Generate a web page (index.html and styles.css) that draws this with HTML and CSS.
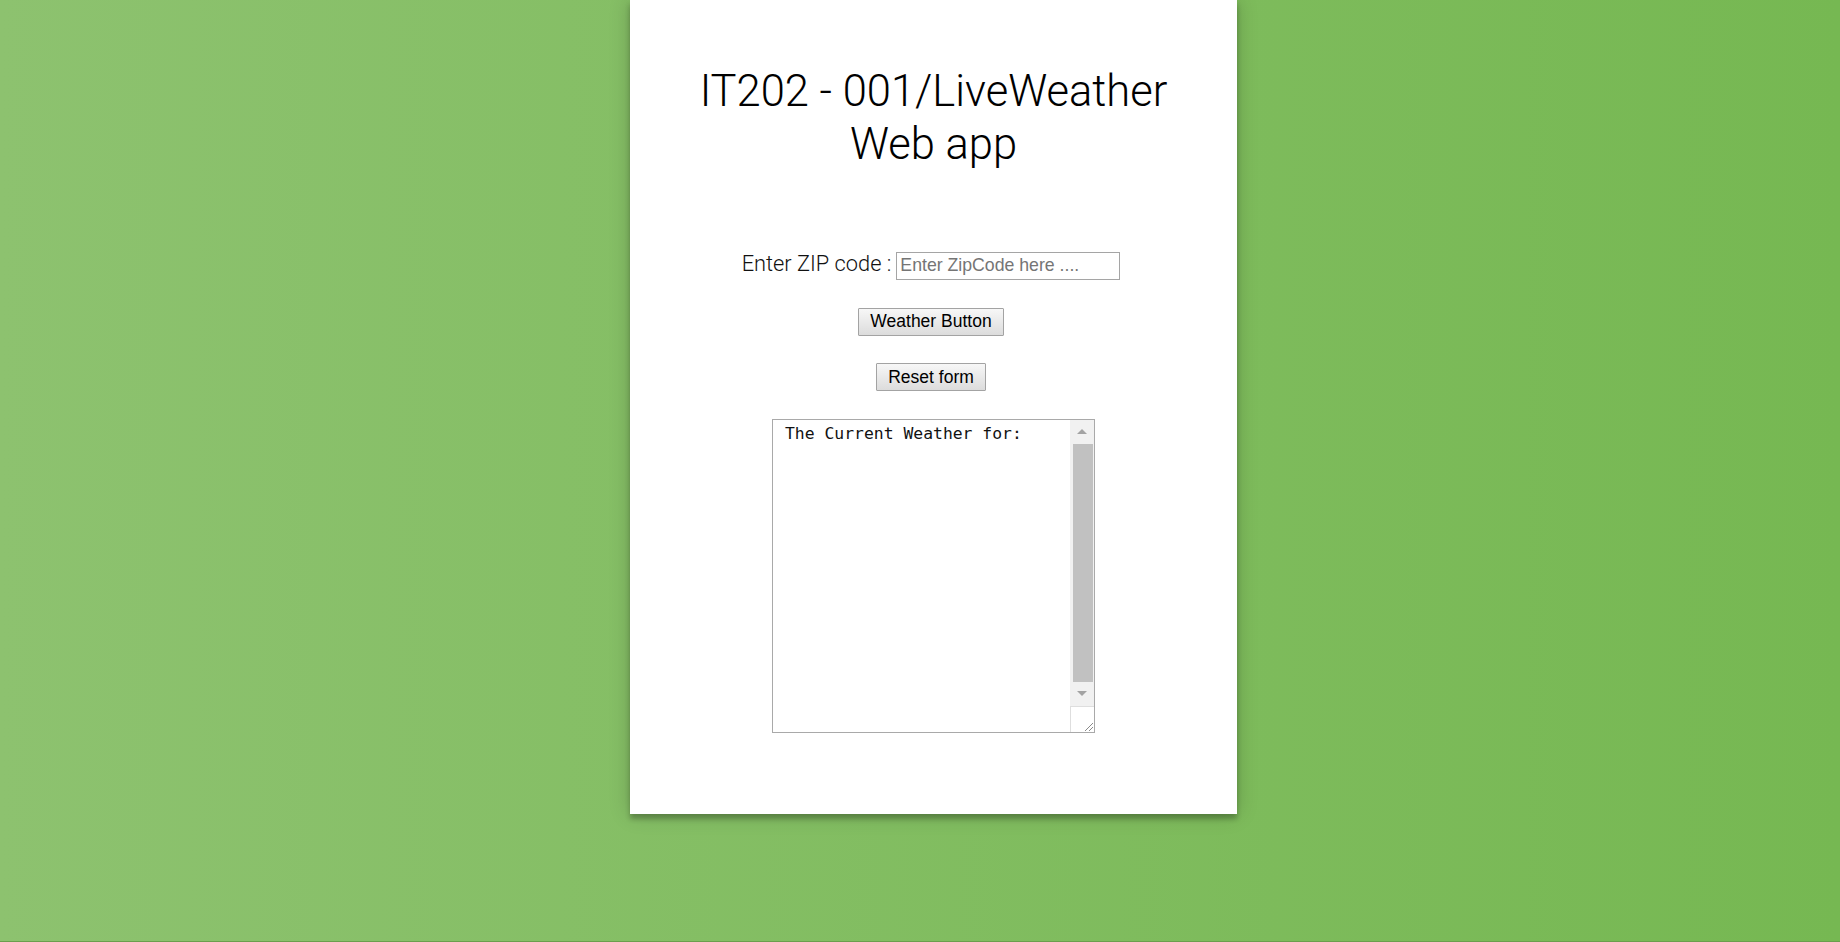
FILE: index.html
```html
<!DOCTYPE html>
<html lang="en">
<head>
<meta charset="utf-8">
<title>LiveWeather</title>
<link rel="stylesheet" href="styles.css">
</head>
<body>
<div class="page">
  <main class="card">
    <h1 class="title">IT202 - 001/LiveWeather Web app</h1>
    <form class="form">
      <div class="zip-row">
        <label class="zip-label" for="zip">Enter ZIP code :</label>
        <input class="zip-input" id="zip" type="text" placeholder="Enter ZipCode here ....">
      </div>
      <button class="btn" type="button">Weather Button</button>
      <button class="btn" type="reset">Reset form</button>
      <div class="output">
        <textarea class="output-text" readonly>The Current Weather for:</textarea>
        <div class="scrollbar">
          <div class="sb-btn"><span class="arrow-up"></span></div>
          <div class="sb-track"><div class="sb-thumb"></div></div>
          <div class="sb-btn"><span class="arrow-down"></span></div>
          <div class="sb-corner">
            <svg width="12" height="12" viewBox="0 0 12 12"><path d="M11 3 L3 11 M11 7 L7 11" stroke="#8a8a8a" stroke-width="1" fill="none"/></svg>
          </div>
        </div>
      </div>
    </form>
  </main>
</div>
</body>
</html>
```
FILE: styles.css
```css
html, body {
  margin: 0;
  padding: 0;
}

body {
  height: 100vh;
  box-sizing: border-box;
  border-bottom: 1px solid #6a9f4d;
  background: linear-gradient(to left, #76b852, #8dc26f);
  overflow: hidden;
}

.page {
  display: flex;
  justify-content: center;
  padding-left: 27px;
}

.card {
  width: 607px;
  box-sizing: border-box;
  background: #ffffff;
  padding: 66px 50px 81px;
  box-shadow: 0 0 20px 0 rgba(0, 0, 0, 0.2), 0 5px 5px 0 rgba(0, 0, 0, 0.24);
  text-align: center;
}

.title {
  margin: 0;
  font-family: Roboto, "Noto Sans", sans-serif;
  font-weight: 300;
  font-size: 43.5px;
  line-height: 52.7px;
  color: #000;
}

.form {
  margin: 80px 5px 0 0;
  display: flex;
  flex-direction: column;
  align-items: center;
  gap: 27.6px;
}

.zip-row {
  display: flex;
  align-items: baseline;
  justify-content: center;
  gap: 5px;
}

.zip-label {
  font-family: Roboto, "Noto Sans", sans-serif;
  font-weight: 300;
  font-size: 21.8px;
  color: #111;
}

.zip-input {
  width: 224px;
  height: 28px;
  box-sizing: border-box;
  margin: 0;
  padding: 0 3px;
  border: 1px solid #a5a5a5;
  font-family: "Liberation Sans", Arial, sans-serif;
  font-size: 17.7px;
  color: #000;
  background: #fff;
  outline: none;
}

.zip-input::placeholder {
  color: #757575;
}

.btn {
  height: 28px;
  margin: 0;
  padding: 0 11px;
  box-sizing: border-box;
  border: 1px solid #a3a3a3;
  border-radius: 1px;
  background: linear-gradient(#f7f7f7, #dcdcdc);
  font-family: "Liberation Sans", Arial, sans-serif;
  font-size: 17.5px;
  color: #000;
}

.output {
  display: flex;
  width: 323px;
  height: 314px;
  margin-left: 5px;
  box-sizing: border-box;
  border: 1px solid #a9a9a9;
  background: #fff;
}

.output-text {
  flex: 1;
  min-width: 0;
  margin: 0;
  border: none;
  outline: none;
  resize: none;
  overflow: hidden;
  padding: 4px 12px;
  font-family: "DejaVu Sans Mono", "Liberation Mono", monospace;
  font-size: 16.4px;
  line-height: 19px;
  color: #111;
  background: #fff;
}

.scrollbar {
  width: 24px;
  display: flex;
  flex-direction: column;
}

.sb-btn {
  height: 24px;
  background: #f1f1f1;
  display: flex;
  align-items: center;
  justify-content: center;
}

.arrow-up {
  width: 0;
  height: 0;
  border-left: 5px solid transparent;
  border-right: 5px solid transparent;
  border-bottom: 5px solid #a3a3a3;
}

.arrow-down {
  width: 0;
  height: 0;
  border-left: 5px solid transparent;
  border-right: 5px solid transparent;
  border-top: 5px solid #a3a3a3;
}

.sb-track {
  flex: 1;
  background: #f1f1f1;
  padding: 0 1px 0 3px;
}

.sb-thumb {
  height: 100%;
  background: #c1c1c1;
}

.sb-corner {
  height: 26px;
  box-sizing: border-box;
  border-top: 1px solid #dedede;
  border-left: 1px solid #dedede;
  background: #fff;
  display: flex;
  align-items: flex-end;
  justify-content: flex-end;
}

.sb-corner svg {
  display: block;
}
```
